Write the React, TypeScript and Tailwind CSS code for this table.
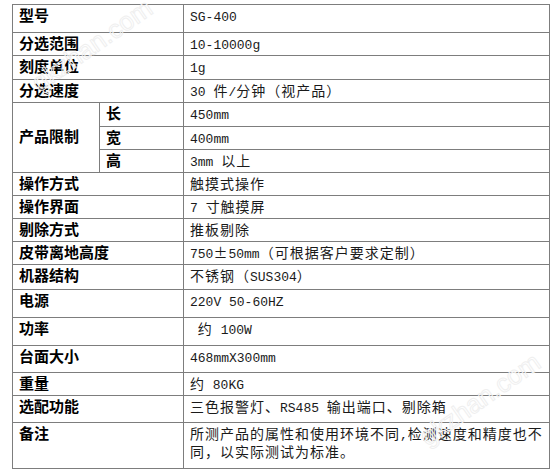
import React from "react";

type Row = {
  label: string;
  value: React.ReactNode;
  h: string;
  dark?: boolean;
};

// split a value into CJK runs and ASCII runs (ASCII is half-width like SimSun)
function Mixed({ text }: { text: string }) {
  const parts = text.split(/([\x20-\x7E]+)/).filter((p) => p !== "");
  return (
    <>
      {parts.map((p, i) =>
        /^[\x20-\x7E]+$/.test(p) ? (
          <span
            key={i}
            className="font-['Liberation_Mono',monospace] text-[13px] leading-[12px] tracking-normal"
          >
            {p}
          </span>
        ) : (
          <span key={i} className="leading-[12px]">
            {p}
          </span>
        )
      )}
    </>
  );
}

const labelCls =
  "border border-[#7d7d7d] align-top pl-[6px] pt-[1px] text-[15px] leading-[18px] font-bold text-black font-['Noto_Sans_CJK_SC',sans-serif]";
const valueCls =
  "border border-[#7d7d7d] align-top pl-[6px] pt-[1px] text-[14px] leading-[18px] tracking-[1px] text-[#1a1a1a] whitespace-pre font-['Noto_Sans_CJK_SC',sans-serif]";

const topRows: Row[] = [
  { label: "型号", value: <Mixed text="SG-400" />, h: "h-[28px]" },
  { label: "分选范围", value: <Mixed text="10-10000g" />, h: "h-[23px]" },
  { label: "刻度单位", value: <Mixed text="1g" />, h: "h-[24px]", dark: true },
  { label: "分选速度", value: <Mixed text="30 件/分钟（视产品）" />, h: "h-[23px]" },
];

const limitRows: Row[] = [
  { label: "长", value: <Mixed text="450mm" />, h: "h-[24px]" },
  { label: "宽", value: <Mixed text="400mm" />, h: "h-[23px]", dark: true },
  { label: "高", value: <Mixed text="3mm 以上" />, h: "h-[23px]" },
];

const bottomRows: Row[] = [
  { label: "操作方式", value: <Mixed text="触摸式操作" />, h: "h-[23px]" },
  { label: "操作界面", value: <Mixed text="7 寸触摸屏" />, h: "h-[23px]" },
  { label: "剔除方式", value: <Mixed text="推板剔除" />, h: "h-[23px]" },
  { label: "皮带离地高度", value: <Mixed text="750±50mm（可根据客户要求定制）" />, h: "h-[23px]", dark: true },
  { label: "机器结构", value: <Mixed text="不锈钢（SUS304）" />, h: "h-[25px]" },
  { label: "电源", value: <Mixed text="220V 50-60HZ" />, h: "h-[28px]" },
  { label: "功率", value: <Mixed text=" 约 100W" />, h: "h-[28px]" },
  { label: "台面大小", value: <Mixed text="468mmX300mm" />, h: "h-[27px]" },
  { label: "重量", value: <Mixed text="约 80KG" />, h: "h-[23px]" },
  { label: "选配功能", value: <Mixed text="三色报警灯、RS485 输出端口、剔除箱" />, h: "h-[27px]", dark: true },
  {
    label: "备注",
    value: (
      <>
        <Mixed text="所测产品的属性和使用环境不同,检测速度和精度也不" />
        <br />
        <Mixed text="同，以实际测试为标准。" />
      </>
    ),
    h: "h-[46px]",
  },
];

function Watermark({ className }: { className: string }) {
  return (
    <div
      className={
        "pointer-events-none absolute text-[26px] font-['Liberation_Sans',sans-serif] text-transparent [-webkit-text-stroke:1px_#efefef] -rotate-[35deg] " +
        className
      }
    >
      gkzhan.com
    </div>
  );
}

export default function App() {
  return (
    <div className="relative w-[554px] h-[473px] bg-white pl-[12px] pt-[4px]">
      <table className="table-fixed border-collapse w-[537px]">
        <colgroup>
          <col className="w-[87px]" />
          <col className="w-[84px]" />
          <col className="w-[366px]" />
        </colgroup>
        <tbody>
          {topRows.map((r) => (
            <tr key={r.label} className={r.h}>
              <td colSpan={2} className={labelCls + (r.dark ? " border-t-black" : "")}>
                {r.label}
              </td>
              <td className={valueCls + (r.dark ? " border-t-black" : "")}>{r.value}</td>
            </tr>
          ))}
          {limitRows.map((r, i) => (
            <tr key={r.label} className={r.h}>
              {i === 0 && (
                <td
                  rowSpan={3}
                  className="border border-[#7d7d7d] align-middle pl-[6px] pb-[4px] text-[15px] leading-[18px] font-bold text-black font-['Noto_Sans_CJK_SC',sans-serif]"
                >
                  产品限制
                </td>
              )}
              <td className={labelCls + (r.dark ? " border-t-black" : "")}>{r.label}</td>
              <td className={valueCls + (r.dark ? " border-t-black" : "")}>{r.value}</td>
            </tr>
          ))}
          {bottomRows.map((r) => (
            <tr key={r.label} className={r.h}>
              <td colSpan={2} className={labelCls + (r.dark ? " border-t-black" : "")}>
                {r.label}
              </td>
              <td className={valueCls + (r.dark ? " border-t-black" : "")}>{r.value}</td>
            </tr>
          ))}
        </tbody>
      </table>
      <Watermark className="left-[22px] top-[26px]" />
      <Watermark className="left-[410px] top-[380px]" />
    </div>
  );
}
